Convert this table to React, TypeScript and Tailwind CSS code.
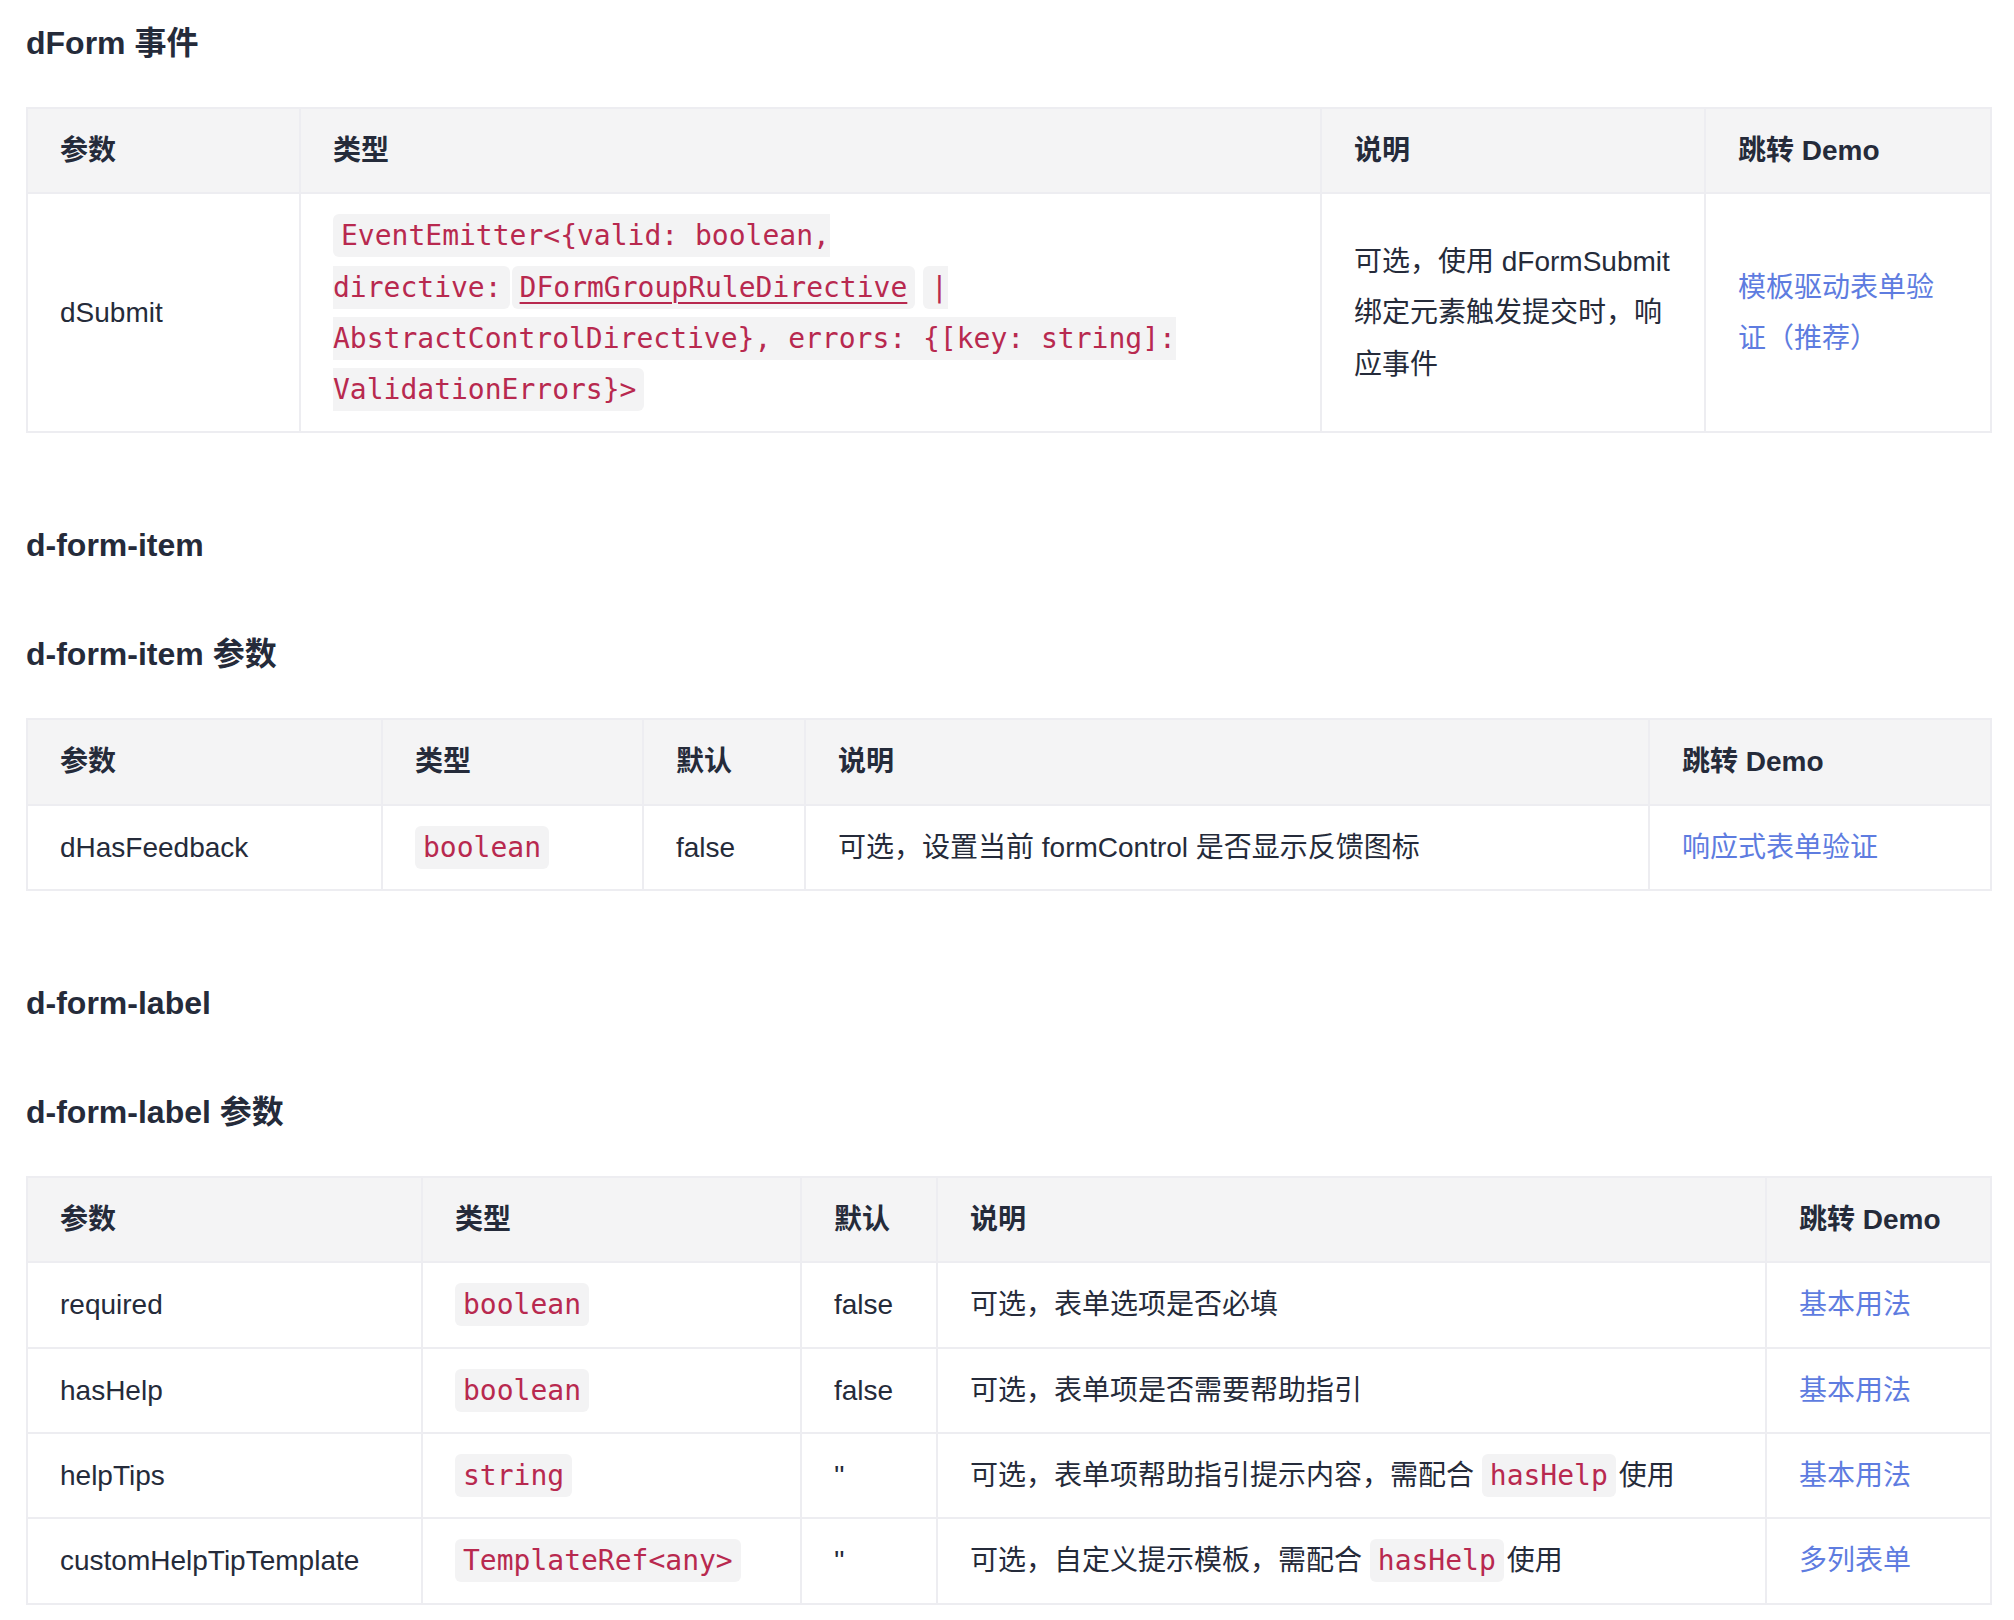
import React from "react";

const SANS = "font-['Liberation_Sans','Noto_Sans_CJK_SC',sans-serif]";

function Code({ children, className = "" }: { children: React.ReactNode; className?: string }) {
  return (
    <code
      className={
        "font-['DejaVu_Sans_Mono','Noto_Sans_CJK_SC',monospace] text-[28px] text-[#b8294f] bg-[#f3f3f4] py-[5px] " +
        className
      }
    >
      {children}
    </code>
  );
}

function Pill({ children }: { children: React.ReactNode }) {
  return <Code className="rounded-[6px] px-[8px]">{children}</Code>;
}

function Link({ children }: { children: React.ReactNode }) {
  return <a className="text-[#5e7ce0] cursor-pointer">{children}</a>;
}

const th =
  "border-2 border-[#ededf1] bg-[#f4f4f5] px-[32px] py-[16px] text-left align-middle font-bold";
const td = "border-2 border-[#ededf1] px-[32px] py-[16px] text-left align-middle font-normal";

function Table({
  widths,
  headers,
  rows,
}: {
  widths: number[];
  headers: string[];
  rows: React.ReactNode[][];
}) {
  return (
    <table className="table-fixed border-collapse w-[1964px] text-[28px] leading-[51.3px] text-[#252b3a]">
      <colgroup>
        {widths.map((w, i) => (
          <col key={i} style={{ width: w }} />
        ))}
      </colgroup>
      <thead>
        <tr>
          {headers.map((h, i) => (
            <th key={i} className={th}>
              {h}
            </th>
          ))}
        </tr>
      </thead>
      <tbody>
        {rows.map((r, ri) => (
          <tr key={ri}>
            {r.map((c, ci) => (
              <td key={ci} className={td}>
                {c}
              </td>
            ))}
          </tr>
        ))}
      </tbody>
    </table>
  );
}

function H({ children, className = "" }: { children: React.ReactNode; className?: string }) {
  return (
    <h3 className={"text-[32px] leading-[48px] font-bold text-[#252b3a] " + className}>{children}</h3>
  );
}

export default function App() {
  const eventType = (
    <span>
      <Code className="rounded-l-[6px] pl-[8px]">{"EventEmitter<{valid: boolean,"}</Code>
      <br />
      <Code className="rounded-r-[6px] pr-[8px]">{"directive:"}</Code>
      <a className="ml-[2px]">
        <Code className="rounded-[6px] px-[8px] underline decoration-[#b8294f] underline-offset-[5px] decoration-2">
          DFormGroupRuleDirective
        </Code>
      </a>{" "}
      <Code className="rounded-l-[6px] pl-[8px]">|</Code>
      <br />
      <Code>{"AbstractControlDirective}, errors: {[key: string]:"}</Code>
      <br />
      <Code className="rounded-r-[6px] pr-[8px]">{"ValidationErrors}>"}</Code>
    </span>
  );

  return (
    <div className={"min-h-[1620px] w-[2014px] bg-white pl-[26px] pt-[19px] " + SANS}>
      <H>dForm 事件</H>
      <div className="mt-[40px]">
        <Table
          widths={[273, 1021, 384, 286]}
          headers={["参数", "类型", "说明", "跳转 Demo"]}
          rows={[
            [
              "dSubmit",
              eventType,
              <span>
                可选，使用 dFormSubmit
                <br />
                绑定元素触发提交时，响
                <br />
                应事件
              </span>,
              <Link>
                模板驱动表单验
                <br />
                证（推荐）
              </Link>,
            ],
          ]}
        />
      </div>

      <H className="mt-[88px]">d-form-item</H>
      <H className="mt-[61px]">d-form-item 参数</H>
      <div className="mt-[40px]">
        <Table
          widths={[355, 261, 162, 844, 342]}
          headers={["参数", "类型", "默认", "说明", "跳转 Demo"]}
          rows={[
            [
              "dHasFeedback",
              <Pill>boolean</Pill>,
              "false",
              "可选，设置当前 formControl 是否显示反馈图标",
              <Link>响应式表单验证</Link>,
            ],
          ]}
        />
      </div>

      <H className="mt-[88px]">d-form-label</H>
      <H className="mt-[61px]">d-form-label 参数</H>
      <div className="mt-[40px]">
        <Table
          widths={[395, 379, 136, 829, 225]}
          headers={["参数", "类型", "默认", "说明", "跳转 Demo"]}
          rows={[
            ["required", <Pill>boolean</Pill>, "false", "可选，表单选项是否必填", <Link>基本用法</Link>],
            ["hasHelp", <Pill>boolean</Pill>, "false", "可选，表单项是否需要帮助指引", <Link>基本用法</Link>],
            [
              "helpTips",
              <Pill>string</Pill>,
              "''",
              <span>
                可选，表单项帮助指引提示内容，需配合 <Pill>hasHelp</Pill>
                <span className="ml-[3px]">使用</span>
              </span>,
              <Link>基本用法</Link>,
            ],
            [
              "customHelpTipTemplate",
              <Pill>{"TemplateRef<any>"}</Pill>,
              "''",
              <span>
                可选，自定义提示模板，需配合 <Pill>hasHelp</Pill>
                <span className="ml-[3px]">使用</span>
              </span>,
              <Link>多列表单</Link>,
            ],
          ]}
        />
      </div>
    </div>
  );
}
